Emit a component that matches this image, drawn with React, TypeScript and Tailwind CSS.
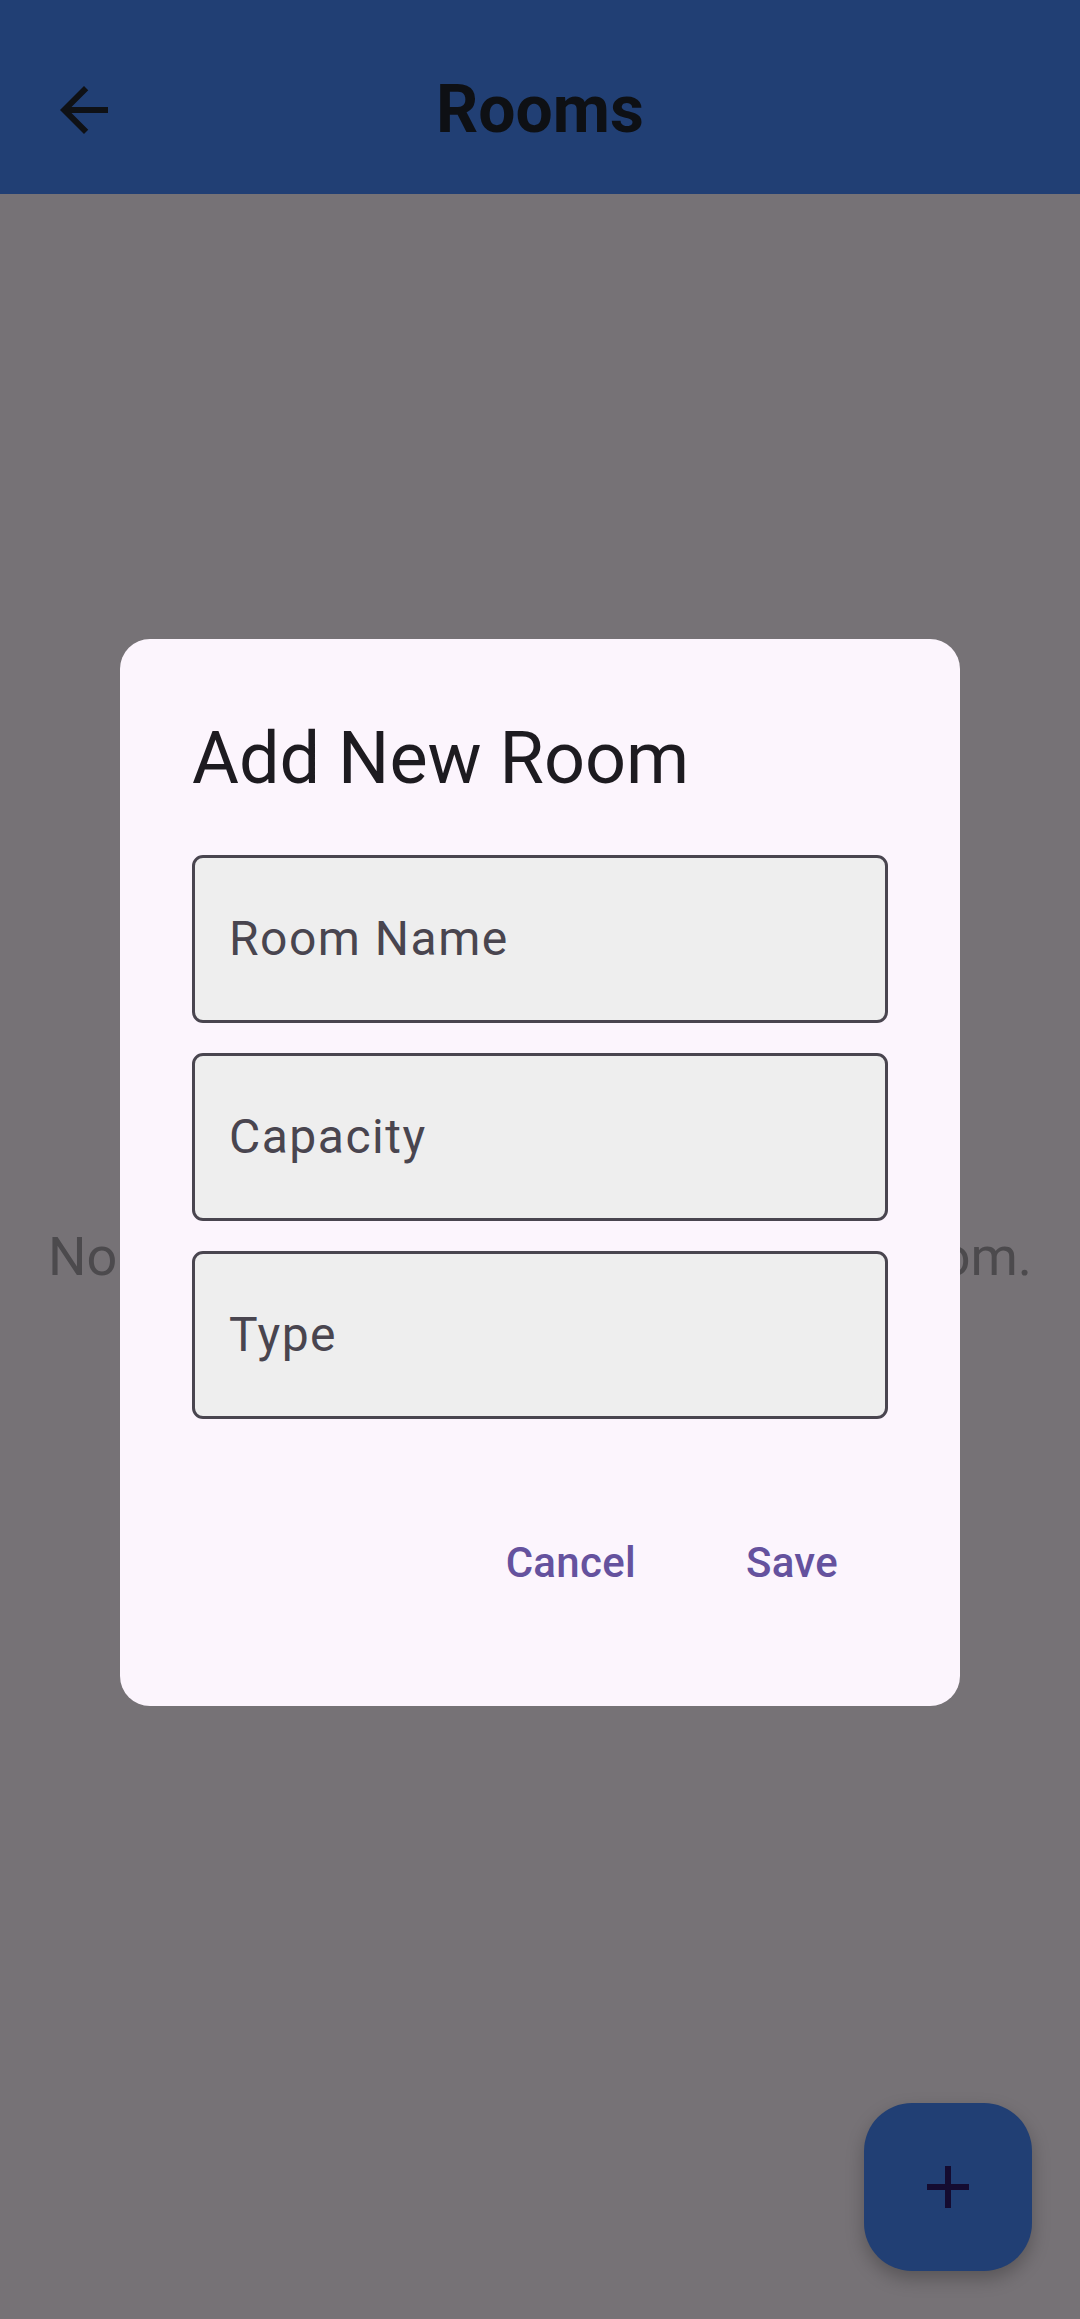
import { type FC } from 'react';

const fields = ['Room Name', 'Capacity', 'Type'];

const BackIcon: FC = () => (
  <svg viewBox="0 0 24 24" className="h-[72px] w-[72px]" fill="#0f1115">
    <path d="M20 11H7.83l5.59-5.59L12 4l-8 8 8 8 1.41-1.41L7.83 13H20v-2z" />
  </svg>
);

const AddIcon: FC = () => (
  <svg viewBox="0 0 24 24" className="h-[72px] w-[72px]" fill="#140b30">
    <path d="M19 13h-6v6h-2v-6H5v-2h6V5h2v6h6v2z" />
  </svg>
);

const App: FC = () => {
  return (
    <div
      className="relative flex h-[2319px] w-[1080px] flex-col overflow-hidden bg-[#767276]"
      style={{ fontFamily: 'Roboto, "Noto Sans", sans-serif' }}
    >
      {/* app bar, dimmed by the scrim */}
      <header className="h-[194px] shrink-0 bg-[#213f74] pt-[26px]">
        <nav className="relative flex h-[168px] items-center justify-center">
          <span className="absolute left-[48px] top-[48px] flex">
            <BackIcon />
          </span>
          <h1 className="text-[66px] font-bold leading-none text-[#0e1014]">Rooms</h1>
        </nav>
      </header>

      <main className="flex flex-1 items-center justify-center">
        <p className="text-[54px] leading-none text-[#4c4a4d]">
          No rooms available. Tap + to add a room.
        </p>
      </main>

      {/* dialog */}
      <section className="absolute left-[120px] top-[639px] flex h-[1067px] w-[840px] flex-col rounded-[30px] bg-[#fcf5fd] px-[72px] pt-[72px]">
        <h2 className="h-[96px] text-[72px] leading-[96px] text-[#1d1b20]">Add New Room</h2>
        <div className="mt-[48px] flex flex-col gap-[30px]">
          {fields.map((label) => (
            <div
              key={label}
              className="flex h-[168px] items-center rounded-[11px] border-[3px] border-[#49454f] bg-[#eeeeee] pl-[34px]"
            >
              <span className="text-[48px] leading-none tracking-[1.5px] text-[#49454f]">
                {label}
              </span>
            </div>
          ))}
        </div>
        <div className="mt-[83px] flex justify-end gap-[24px]">
          <button className="flex h-[120px] min-w-[192px] items-center justify-center px-[36px] text-[42px] font-medium tracking-[0.3px] text-[#65529e]">
            Cancel
          </button>
          <button className="flex h-[120px] min-w-[192px] items-center justify-center px-[36px] text-[42px] font-medium tracking-[0.3px] text-[#65529e]">
            Save
          </button>
        </div>
      </section>

      {/* fab */}
      <button className="absolute bottom-[48px] right-[48px] flex h-[168px] w-[168px] items-center justify-center rounded-[48px] bg-[#213f74] shadow-[0_8px_18px_rgba(0,0,0,0.25)]">
        <AddIcon />
      </button>
    </div>
  );
};

export default App;
